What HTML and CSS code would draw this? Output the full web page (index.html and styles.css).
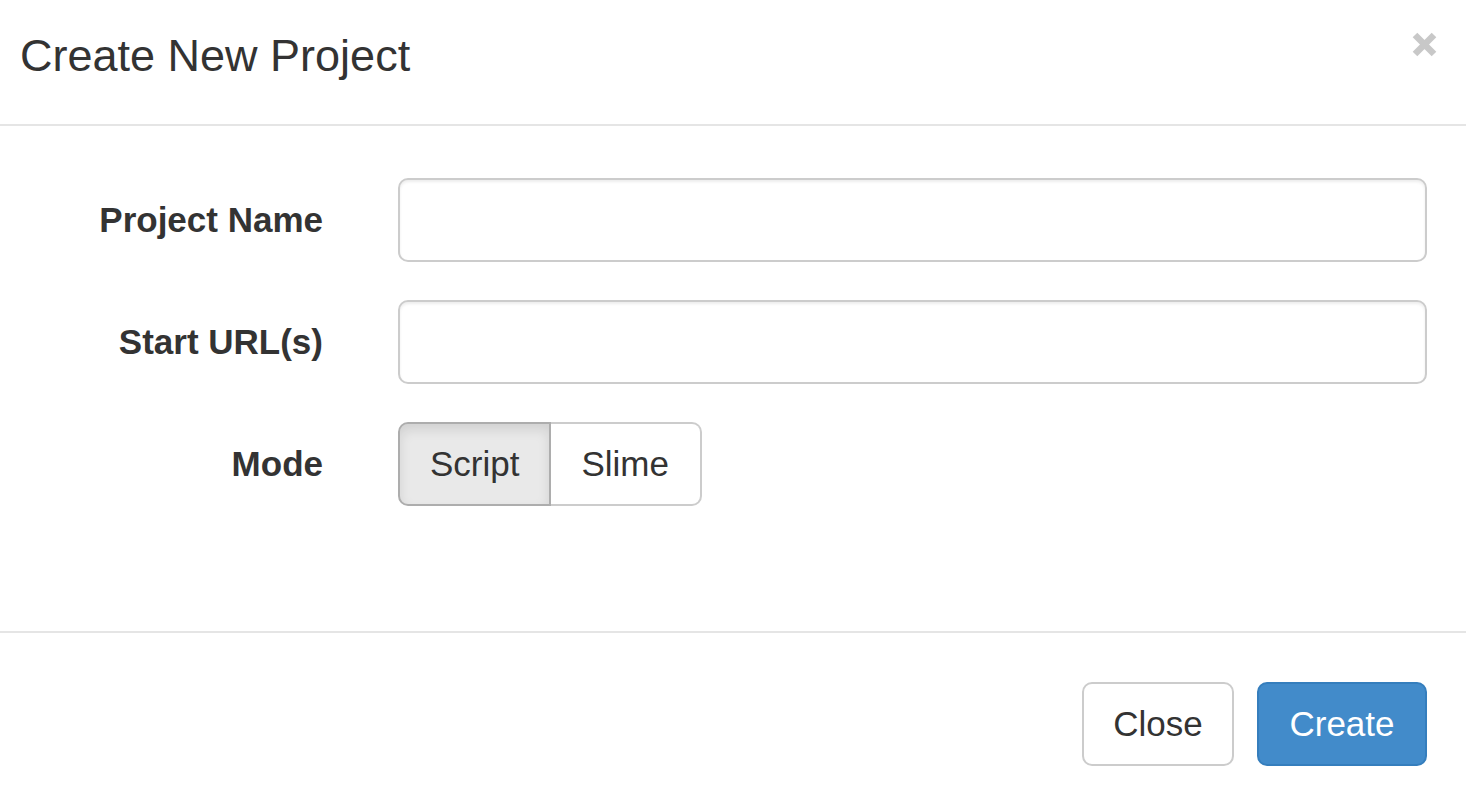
FILE: index.html
```html
<!DOCTYPE html>
<html>
<head>
<meta charset="utf-8">
<link rel="stylesheet" href="styles.css">
</head>
<body>
<div class="modal">
  <div class="modal-header">
    <h4 class="modal-title">Create New Project</h4>
    <button class="close" type="button" aria-label="Close">
      <svg width="25" height="25" viewBox="0 0 25 25"><path d="M3 3 L22 22 M22 3 L3 22" stroke="#c8c8c8" stroke-width="6.5" fill="none"/></svg>
    </button>
  </div>
  <div class="modal-body">
    <form class="form-grid">
      <label class="form-label">Project Name</label>
      <input class="form-control" type="text">
      <label class="form-label">Start URL(s)</label>
      <input class="form-control" type="text">
      <label class="form-label">Mode</label>
      <div class="btn-group">
        <button type="button" class="btn btn-default active">Script</button>
        <button type="button" class="btn btn-default">Slime</button>
      </div>
    </form>
  </div>
  <div class="modal-footer">
    <button type="button" class="btn btn-default btn-close">Close</button>
    <button type="button" class="btn btn-primary">Create</button>
  </div>
</div>
</body>
</html>
```
FILE: styles.css
```css
* { box-sizing: border-box; }
html, body {
  margin: 0;
  padding: 0;
  background: #fff;
  font-family: "Liberation Sans", Arial, Helvetica, sans-serif;
  color: #333;
}
.modal {
  width: 1466px;
  height: 800px;
  background: #fff;
}
.modal-header {
  height: 126px;
  display: flex;
  justify-content: space-between;
  align-items: flex-start;
  padding: 24px 29px 0 20px;
  border-bottom: 2px solid #e5e5e5;
}
.modal-title {
  margin: 0;
  font-size: 45px;
  font-weight: 400;
  line-height: 64px;
}
.close {
  margin-top: 8px;
  padding: 0;
  border: 0;
  background: transparent;
  width: 25px;
  height: 25px;
  cursor: pointer;
}
.close svg { display: block; }
.modal-body {
  padding: 52px 39px 125px 0;
}
.form-grid {
  display: grid;
  grid-template-columns: 323px 1fr;
  column-gap: 75px;
  row-gap: 38px;
  align-items: center;
  margin: 0;
}
.form-label {
  text-align: right;
  font-weight: 700;
  font-size: 35px;
}
.form-control {
  height: 84px;
  width: 100%;
  border: 2px solid #ccc;
  border-radius: 10px;
  box-shadow: inset 0 2px 3px rgba(0,0,0,.075);
  font-size: 35px;
  padding: 15px 30px;
  font-family: inherit;
}
.btn-group {
  display: flex;
}
.btn {
  height: 84px;
  font-family: inherit;
  font-size: 35px;
  padding: 0 30px;
  border: 2px solid #ccc;
  border-radius: 10px;
  background: #fff;
  color: #333;
  cursor: pointer;
}
.btn-group .btn:first-child {
  border-top-right-radius: 0;
  border-bottom-right-radius: 0;
}
.btn-group .btn:last-child {
  border-top-left-radius: 0;
  border-bottom-left-radius: 0;
  border-left: 0;
  padding: 0 31px 0 30px;
}
.btn.active {
  background: #e9e9e9;
  border-color: #adadad;
  box-shadow: inset 0 6px 12px rgba(0,0,0,.1);
}
.modal-footer {
  border-top: 2px solid #e5e5e5;
  padding: 49px 39px 0 0;
  display: flex;
  justify-content: flex-end;
  gap: 23px;
}
.btn-close {
  width: 152px;
  padding: 0;
}
.btn-primary {
  width: 170px;
  padding: 0;
  background: #428bca;
  border-color: #357ebd;
  color: #fff;
}
```
